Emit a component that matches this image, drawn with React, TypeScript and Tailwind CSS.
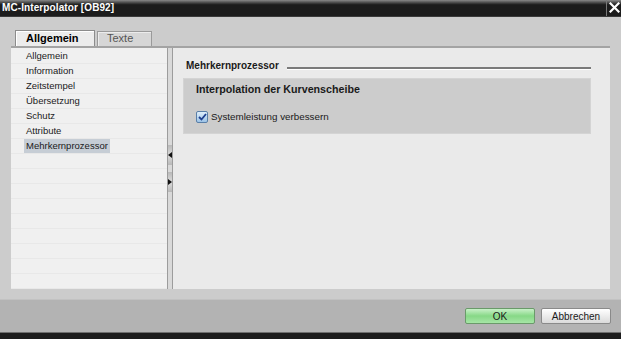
import React from 'react';

const items = [
  'Allgemein',
  'Information',
  'Zeitstempel',
  'Übersetzung',
  'Schutz',
  'Attribute',
  'Mehrkernprozessor',
];

const font = { fontFamily: '"Liberation Sans", Arial, sans-serif' };

export default function App() {
  const rows = [...items, ...Array(9).fill('')];

  return (
    <div className="w-[621px] h-[339px] flex flex-col overflow-hidden bg-[#cccccc]" style={font}>
      {/* Title bar */}
      <div className="h-[17px] flex items-stretch bg-gradient-to-b from-[#8a8a8a] via-[#1c1c1c] via-30% to-[#1c1c1c] border-b border-[#3a3a3a]">
        <div className="flex-1 pl-[2px] flex items-center text-white font-bold text-[10px] tracking-[0.1px]">
          MC-Interpolator [OB92]
        </div>
        <div className="w-[15px] border-l border-[#777] flex items-center justify-center">
          <svg width="11" height="11" viewBox="0 0 11 11">
            <path d="M1.5 1.5 9.5 9.5M9.5 1.5 1.5 9.5" stroke="#fff" strokeWidth="2.2" strokeLinecap="square" />
          </svg>
        </div>
      </div>

      {/* Body */}
      <div className="flex-1 flex flex-col pt-[13px] px-[11px] pb-[10px]">
        {/* Tabs */}
        <div className="h-[16px] flex items-end pl-[4px] gap-[2px]">
          <div className="h-[16px] w-[80px] bg-[#ececec] border border-[#8c8c8c] border-b-0 shadow-[inset_1px_1px_0_#fff] flex items-center pl-[10px] font-bold text-[11px] text-black">
            Allgemein
          </div>
          <div className="h-[15px] w-[55px] bg-[#d6d6d6] border border-[#9a9a9a] border-b-0 shadow-[inset_1px_1px_0_#ececec] flex items-center pl-[9px] text-[11px] text-[#555]">
            Texte
          </div>
        </div>

        {/* Panel */}
        <div className="flex-1 flex border-t-2 border-[#a3a3a3]">
          {/* Left list */}
          <div className="w-[156px] bg-[#f0f0f0] flex flex-col overflow-hidden pt-[1px]">
            {rows.map((label, i) => (
              <div key={i} className="h-[15px] shrink-0 border-b border-[#e8e8e8] flex items-center pl-[15px] pt-[1px]">
                {label && (
                  <span
                    className={`text-[9.5px] text-[#1a1a1a] leading-[14px] px-[2px] -ml-[2px] ${
                      label === 'Mehrkernprozessor' ? 'bg-[#c6cdd5]' : ''
                    }`}
                  >
                    {label}
                  </span>
                )}
              </div>
            ))}
          </div>

          {/* Splitter */}
          <div className="w-[6px] bg-[#d9d9d9] border-l border-r border-[#9c9c9c] flex flex-col pt-[97px] gap-[7px]">
            <div className="h-[20px] bg-gradient-to-b from-[#b8b8b8] via-[#dcdcdc] to-[#b8b8b8] flex items-center justify-center">
              <svg width="4" height="6" viewBox="0 0 4 6">
                <path d="M4 0 0 3 4 6Z" fill="#111" />
              </svg>
            </div>
            <div className="h-[20px] bg-gradient-to-b from-[#b8b8b8] via-[#dcdcdc] to-[#b8b8b8] flex items-center justify-center">
              <svg width="4" height="6" viewBox="0 0 4 6">
                <path d="M0 0 4 3 0 6Z" fill="#111" />
              </svg>
            </div>
          </div>

          {/* Right content */}
          <div className="flex-1 bg-[#eaeaea] pt-[11px] pl-[10px] pr-[19px]">
            <div className="flex items-center pl-[3px] h-[14px]">
              <span className="font-bold text-[10px] text-[#1a1a1a]">Mehrkernprozessor</span>
              <div className="flex-1 ml-[8px] mt-[4px] h-[2px] bg-[#7a7a7a] shadow-[0_1px_0_#fff]" />
            </div>
            <div className="mt-[5px] h-[56px] bg-[#cccccc] border border-[#d4d4d4] pl-[12px] pt-[3px]">
              <div className="font-bold text-[10.7px] text-[#1a1a1a] h-[15px] flex items-center">
                Interpolation der Kurvenscheibe
              </div>
              <div className="mt-[13px] flex items-center gap-[3px]">
                <div className="w-[12px] h-[12px] rounded-[2px] border border-[#5a7fa8] bg-gradient-to-b from-[#dfeefb] to-[#9cc3e6] flex items-center justify-center">
                  <svg width="9" height="8" viewBox="0 0 9 8">
                    <path d="M1 4 3.5 6.5 8 1" stroke="#1f3f8f" strokeWidth="1.8" fill="none" />
                  </svg>
                </div>
                <span className="text-[9.8px] text-[#1a1a1a]">Systemleistung verbessern</span>
              </div>
            </div>
          </div>
        </div>
      </div>

      {/* Footer */}
      <div className="h-[34px] bg-[#b3b3b3] border-t border-[#c2c2c2] flex items-center justify-end pr-[10px] gap-[6px] pt-[1px]">
        <button className="w-[70px] h-[16px] rounded-[2px] border border-[#6a9a6a] bg-gradient-to-b from-[#c8f0c8] via-[#86d886] to-[#a6e6a6] text-[10px] text-[#1a1a1a] flex items-center justify-center">
          OK
        </button>
        <button className="w-[70px] h-[16px] rounded-[2px] border border-[#8a8a8a] bg-gradient-to-b from-[#ffffff] to-[#dadada] text-[10px] text-[#1a1a1a] flex items-center justify-center">
          Abbrechen
        </button>
      </div>
      <div className="h-[7px] bg-[#1c1c1c] border-t border-[#6e6e6e]" />
    </div>
  );
}
